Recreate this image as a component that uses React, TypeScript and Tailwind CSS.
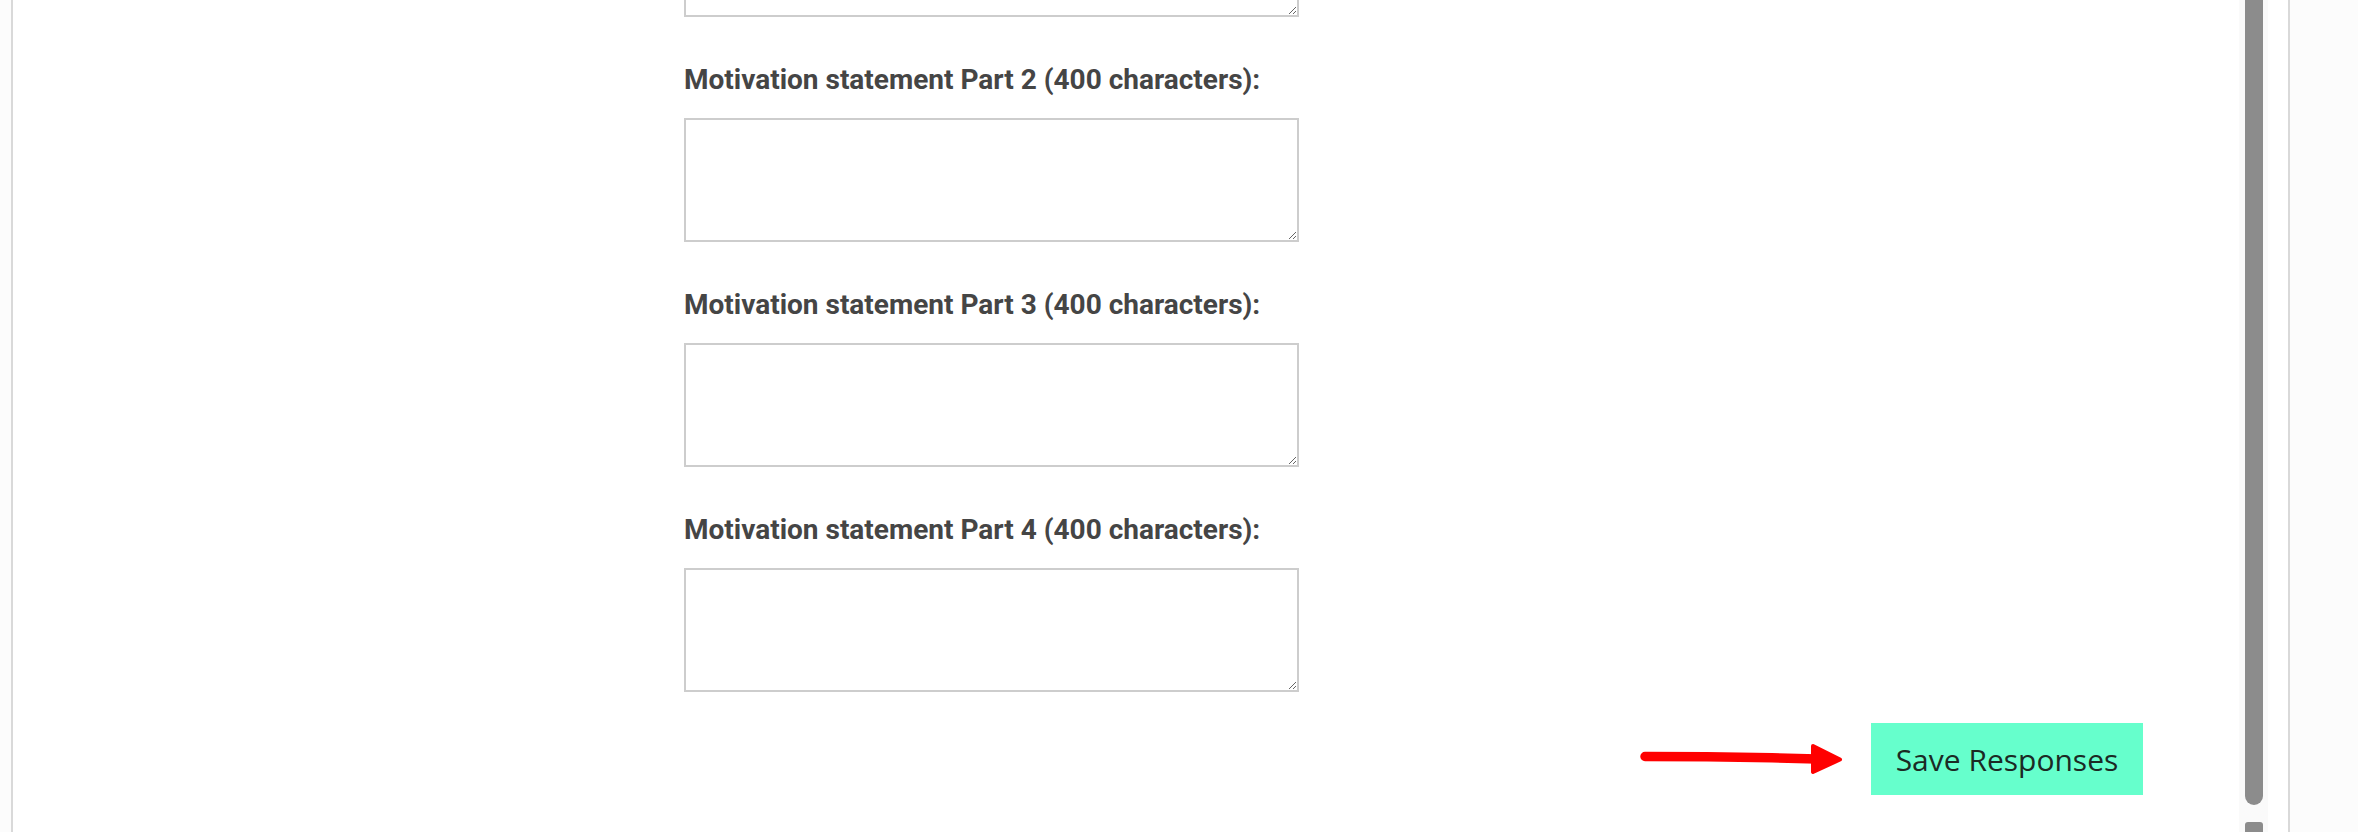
import React from "react";

function Field({ label }: { label: string }) {
  return (
    <div className="flex flex-col">
      <label className="mt-[46px] mb-[21px] h-[34px] font-['Roboto'] text-[28px] font-bold leading-[34px] text-[#454545] whitespace-nowrap">
        {label}
      </label>
      <textarea className="h-[124px] w-[615px] border-2 border-[#cdcdcd] bg-white outline-none" />
    </div>
  );
}

export default function App() {
  return (
    <div className="flex h-[832px] w-full overflow-hidden bg-[#fcfcfc]">
      <div className="w-[11px] shrink-0" />
      <div className="flex flex-1 border-x-2 border-[#d9d9d9] bg-white">
        <div className="flex flex-1 flex-col pl-[671px]">
          <textarea className="-mt-[107px] h-[124px] w-[615px] shrink-0 border-2 border-[#cdcdcd] bg-white outline-none" />
          <Field label="Motivation statement Part 2 (400 characters):" />
          <Field label="Motivation statement Part 3 (400 characters):" />
          <Field label="Motivation statement Part 4 (400 characters):" />
          <div className="mt-[31px] flex items-center justify-end gap-[26px] pr-[101px]">
            <svg width="210" height="34" viewBox="0 0 210 34">
              <path
                d="M10 14.5 L72 14.8 L137 15.8 L182 17"
                stroke="#ff0000"
                strokeWidth="9.5"
                strokeLinecap="round"
                fill="none"
              />
              <path
                d="M178 4 L205 17.5 L178 30 Z"
                fill="#ff0000"
                stroke="#ff0000"
                strokeWidth="4"
                strokeLinejoin="round"
              />
            </svg>
            <button className="flex h-[72px] w-[272px] items-center justify-center bg-[#66ffcc] font-['Open_Sans'] text-[30px] font-normal text-[#1b2a24]">
              Save Responses
            </button>
          </div>
        </div>
        <div className="flex w-[44px] shrink-0">
          <div className="ml-[-5px] flex w-[29px] flex-col items-center bg-[#fafafa]">
            <div className="h-[812px] w-[18px] rounded-b-[9px] bg-[#8c8c8c]" />
            <div className="mt-[17px] h-[10px] w-[18px] rounded-t-[3px] bg-[#8c8c8c]" />
          </div>
        </div>
      </div>
      <div className="w-[68px] shrink-0" />
    </div>
  );
}
